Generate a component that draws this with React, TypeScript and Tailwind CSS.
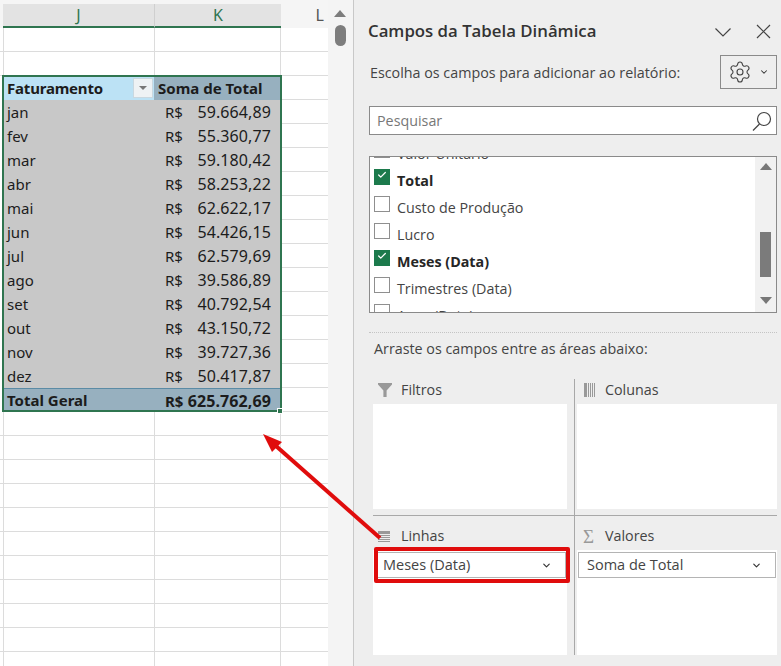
import { Check, ChevronDown, Settings } from "lucide-react"

const months = [
  ["jan", "59.664,89"],
  ["fev", "55.360,77"],
  ["mar", "59.180,42"],
  ["abr", "58.253,22"],
  ["mai", "62.622,17"],
  ["jun", "54.426,15"],
  ["jul", "62.579,69"],
  ["ago", "39.586,89"],
  ["set", "40.792,54"],
  ["out", "43.150,72"],
  ["nov", "39.727,36"],
  ["dez", "50.417,87"],
]

const fields = [
  { name: "Valor Unitário", on: false },
  { name: "Total", on: true },
  { name: "Custo de Produção", on: false },
  { name: "Lucro", on: false },
  { name: "Meses (Data)", on: true },
  { name: "Trimestres (Data)", on: false },
  { name: "Anos (Data)", on: false },
]

function BlankRow() {
  return (
    <div className="flex h-6 shrink-0 border-b border-[#dcdcdc] pl-[3px]">
      <div className="w-[151px] border-l border-[#dcdcdc]" />
      <div className="w-[127px] border-x border-[#dcdcdc]" />
      <div className="flex-1" />
    </div>
  )
}

function PivotRow({ label, value, total }: { label: string; value: string; total?: boolean }) {
  return (
    <div className="flex h-6 shrink-0 pl-[3px] text-[15px] text-[#1c1c1c]">
      <div
        className={`flex w-[278px] items-center justify-between pl-1 pr-[10px] ${
          total ? "border-t border-[#5b8ba5] bg-[#97b0bf] font-bold" : "bg-[#c8c8c8]"
        }`}
      >
        <span>{label}</span>
        <span className="flex w-[106px] items-baseline justify-between">
          <span>R$</span>
          <span className="text-[16px] tracking-[0.1px]">{value}</span>
        </span>
      </div>
      <div className="flex-1 border-b border-l border-[#dcdcdc]" />
    </div>
  )
}

function Sheet() {
  return (
    <div className="flex h-full w-[328px] shrink-0 flex-col overflow-hidden bg-white font-['Noto_Sans',sans-serif]">
      <div className="flex h-[28px] shrink-0 bg-[#f5f5f5] pl-[3px] pt-1 text-[16px] leading-[22px]">
        <div className="w-[151px] border-b-2 border-[#2f7550] bg-[#e3e3e3] text-center text-[#2f7550]">J</div>
        <div className="w-[127px] border-b-2 border-l border-[#2f7550] border-l-[#cfcfcf] bg-[#e3e3e3] text-center text-[#2f7550]">
          K
        </div>
        <div className="flex-1 pr-1 text-right text-[#555]">L</div>
      </div>
      <BlankRow />
      <BlankRow />
      <div className="relative shrink-0">
        <div className="flex h-6 pl-[3px] text-[15px] font-bold text-[#1c1c1c]">
          <div className="flex w-[151px] items-center justify-between bg-[#bce2f5] pl-1 pr-[1px]">
            <span className="tracking-[-0.2px]">Faturamento</span>
            <span className="flex h-[20px] w-[20px] items-center justify-center border border-[#c9d8e0] bg-[#eef2f4]">
              <span className="h-0 w-0 border-x-[4px] border-t-[4px] border-x-transparent border-t-[#777]" />
            </span>
          </div>
          <div className="flex w-[127px] items-center bg-[#97b0bf] pl-1">Soma de Total</div>
          <div className="flex-1 border-b border-l border-[#dcdcdc]" />
        </div>
        {months.map(([m, v]) => (
          <PivotRow key={m} label={m} value={v} />
        ))}
        <PivotRow label="Total Geral" value="625.762,69" total />
        <div className="pointer-events-none absolute -top-[1px] left-[2px] h-[337px] w-[280px] border-2 border-[#2f7550]" />
        <div className="absolute left-[277px] top-[332px] h-[6px] w-[6px] border border-white bg-[#2f7550]" />
      </div>
      {Array.from({ length: 11 }).map((_, i) => (
        <BlankRow key={i} />
      ))}
    </div>
  )
}

function SheetScrollbar() {
  return (
    <div className="flex h-full w-[26px] shrink-0 flex-col items-center border-r border-[#c8c8c8] bg-[#f4f4f4] pr-[1px] pt-[10px]">
      <span className="h-0 w-0 border-x-[6px] border-b-[7px] border-x-transparent border-b-[#7d7d7d]" />
      <span className="mt-[8px] h-[21px] w-[11px] rounded-full bg-[#7d7d7d]" />
    </div>
  )
}

function FieldList() {
  return (
    <div className="mt-[21px] flex h-[157px] border border-[#8a8a8a] bg-white">
      <div className="flex-1 overflow-hidden">
        <div className="-mt-[17px] pl-1">
          {fields.map((f) => (
            <div key={f.name} className="flex h-[27px] items-center gap-[7px]">
              {f.on ? (
                <span className="-mt-[8px] flex h-4 w-4 shrink-0 items-center justify-center bg-[#1c7a4c]">
                  <Check size={10} strokeWidth={3} className="-mt-[3px] text-white" />
                </span>
              ) : (
                <span className="-mt-[8px] h-4 w-4 shrink-0 border border-[#8f8f8f] bg-white" />
              )}
              <span className={f.on ? "font-bold text-[#262626]" : "text-[#444]"}>{f.name}</span>
            </div>
          ))}
        </div>
      </div>
      <div className="flex w-[21px] shrink-0 flex-col items-center bg-[#f1f1f1] pt-[6px]">
        <span className="h-0 w-0 border-x-[6px] border-b-[7px] border-x-transparent border-b-[#777]" />
        <span className="mt-[62px] h-[45px] w-[11px] bg-[#7b7b7b]" />
        <span className="mt-[20px] h-0 w-0 border-x-[6px] border-t-[7px] border-x-transparent border-t-[#777]" />
      </div>
    </div>
  )
}

function FilterIcon() {
  return (
    <svg width="14" height="14" viewBox="0 0 14 14" className="text-[#999]">
      <path d="M0 0h14v1.5L8.6 7.4V14H5.4V7.4L0 1.5z" fill="currentColor" />
    </svg>
  )
}

function ColumnsIcon() {
  return (
    <svg width="11" height="14" viewBox="0 0 11 14" className="text-[#999]">
      <path d="M0 0h3v14H0zM4 0h1v14H4zM6 0h1v14H6zM8 0h1v14H8zM10 0h1v14h-1z" fill="currentColor" />
    </svg>
  )
}

function RowsIcon() {
  return (
    <svg width="12" height="11" viewBox="0 0 12 11" className="text-[#999]">
      <path d="M0 0h12v3H0zM0 4h12v1H0zM0 6h12v1H0zM0 8h12v1H0zM0 10h12v1H0z" fill="currentColor" />
    </svg>
  )
}

function AreaChip({ label }: { label: string }) {
  return (
    <div className="flex h-[26px] items-center justify-between border border-[#b4b4b4] bg-white pl-2 pr-[13px] text-[14.5px] text-[#444]">
      <span>{label}</span>
      <ChevronDown size={11} strokeWidth={2.5} className="text-[#333]" />
    </div>
  )
}

function Panel() {
  return (
    <div className="flex h-full flex-1 flex-col bg-[#eeeeee] pl-[15px] pr-[5px] font-['Open_Sans',sans-serif] text-[14.3px] leading-5 text-[#444]">
      <div className="flex h-[62px] shrink-0 items-center pr-[6px]">
        <h1 className="-ml-[1px] flex-1 text-[16.8px] font-semibold text-[#333]">Campos da Tabela Dinâmica</h1>
        <svg width="16" height="9" viewBox="0 0 16 9" className="mt-[2px] text-[#444]">
          <path d="M0.5 0.5l7.5 7.5 7.5-7.5" fill="none" stroke="currentColor" strokeWidth="1.2" />
        </svg>
        <svg width="15" height="15" viewBox="0 0 15 15" className="ml-[25px] text-[#444]">
          <path d="M1 1l13 13M14 1L1 14" fill="none" stroke="currentColor" strokeWidth="1.2" />
        </svg>
      </div>
      <div className="-mt-[7px] flex h-[34px] shrink-0 items-center justify-between pl-[1px]">
        <span className="mt-[2px]">Escolha os campos para adicionar ao relatório:</span>
        <div className="flex h-[34px] w-[57px] items-center justify-center gap-[7px] border border-[#8a8a8a]">
          <Settings size={24} strokeWidth={1.1} className="text-[#444]" />
          <ChevronDown size={10} strokeWidth={2.5} className="text-[#333]" />
        </div>
      </div>
      <div className="mt-[17px] flex h-[29px] shrink-0 items-center justify-between border border-[#8a8a8a] bg-white pl-[7px] pr-[3px]">
        <span className="text-[#777]">Pesquisar</span>
        <svg width="22" height="22" viewBox="0 0 22 22" className="text-[#444]">
          <circle cx="13" cy="9" r="6.5" fill="none" stroke="currentColor" strokeWidth="1.2" />
          <path d="M8.5 14L2 20.5" fill="none" stroke="currentColor" strokeWidth="1.2" />
        </svg>
      </div>
      <FieldList />
      <div className="mt-[19px] border-t border-dotted border-[#c4c4c4]" />
      <div className="mt-[6px] pl-[5px]">Arraste os campos entre as áreas abaixo:</div>
      <div className="mt-[20px] grid flex-1 grid-cols-[202px_202px] grid-rows-[137px_1fr] pl-1">
        <div className="flex flex-col border-b border-r border-[#a8a8a8] pr-[7px]">
          <div className="flex h-[25px] items-center gap-[9px] pl-[5px] pb-[3px]">
            <FilterIcon />
            <span>Filtros</span>
          </div>
          <div className="mb-[6px] flex-1 bg-white" />
        </div>
        <div className="flex flex-col border-b border-[#a8a8a8] pl-[2px]">
          <div className="flex h-[25px] items-center gap-[10px] pl-[7px] pb-[3px]">
            <ColumnsIcon />
            <span>Colunas</span>
          </div>
          <div className="mb-[6px] flex-1 bg-white" />
        </div>
        <div className="mb-[11px] flex flex-col border-r border-[#a8a8a8] pr-[7px]">
          <div className="flex h-[34px] items-center gap-[11px] pl-[5px] pt-[6px]">
            <RowsIcon />
            <span>Linhas</span>
          </div>
          <div className="flex-1 bg-white px-[1px] pt-[2px]">
            <AreaChip label="Meses (Data)" />
          </div>
        </div>
        <div className="mb-[11px] flex flex-col pl-[2px]">
          <div className="flex h-[34px] items-center gap-[10px] pl-[6px] pt-[6px]">
            <span className="w-[12px] font-['Liberation_Serif',serif] text-[19px] leading-none text-[#999]">Σ</span>
            <span>Valores</span>
          </div>
          <div className="flex-1 bg-white px-[1px] pt-[2px]">
            <AreaChip label="Soma de Total" />
          </div>
        </div>
      </div>
    </div>
  )
}

export default function App() {
  return (
    <div className="relative flex h-[666px] w-[781px] overflow-hidden">
      <Sheet />
      <SheetScrollbar />
      <Panel />
      <div className="absolute left-[374px] top-[547px] h-[36px] w-[196px] rounded-[2px] border-[4px] border-[#e00c0c]" />
      <svg width="781" height="666" viewBox="0 0 781 666" className="pointer-events-none absolute left-0 top-0">
        <path d="M380 538L276 446" fill="none" stroke="#e00c0c" strokeWidth="4" />
        <path d="M263 434L282 442L272 452z" fill="#e00c0c" />
      </svg>
    </div>
  )
}
